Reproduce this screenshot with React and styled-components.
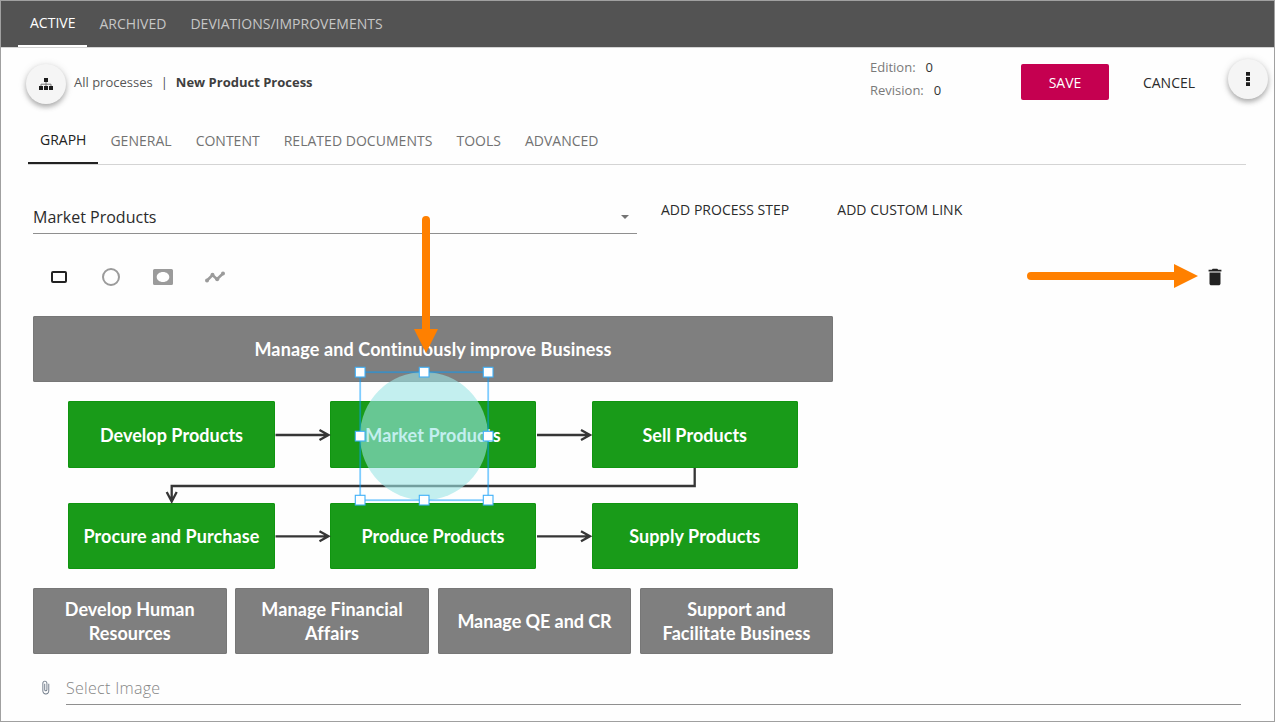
import React from "react";
import styled, { createGlobalStyle } from "styled-components";
import { MdAttachFile, MdDelete } from "react-icons/md";

const GlobalStyle = createGlobalStyle`
  *, *::before, *::after { box-sizing: border-box; }
  body { margin: 0; background: #fff; font-family: "Open Sans", "Noto Sans", sans-serif; }
  button { font: inherit; border: 0; background: none; padding: 0; margin: 0; }
`;

const Window = styled.div`
  position: relative;
  width: 1275px;
  height: 722px;
  border: 1px solid #a0a0a0;
  background: #fefefe;
  overflow: hidden;
`;

const TopBar = styled.nav`
  display: flex;
  height: 47px;
  padding-left: 17px;
  background: #535353;
  border-bottom: 1px solid #d4d4d4;
`;

const TopTab = styled.button`
  height: 46px;
  padding: ${(p) => (p.$active ? "12px 12px 0" : "13px 12px 0")};
  font-size: 14px;
  line-height: 20px;
  letter-spacing: ${(p) => p.$track || 0}px;
  color: ${(p) => (p.$active ? "#fff" : "#c6c6c6")};
  border-bottom: ${(p) => (p.$active ? "2px solid #fff" : "0")};
  display: flex;
  align-items: flex-start;
  white-space: nowrap;
`;

const Header = styled.header`
  display: flex;
  align-items: flex-start;
  height: 69px;
  padding: 11px 6px 0 25px;
`;

const RoundButton = styled.button`
  display: grid;
  place-items: center;
  flex: none;
  width: 40px;
  height: 40px;
  margin-top: ${(p) => p.$top}px;
  border-radius: 50%;
  background: #f5f5f5;
  box-shadow: 0 3px 5px rgba(0, 0, 0, 0.26), 0 1px 8px rgba(0, 0, 0, 0.13);
`;

const Breadcrumb = styled.div`
  display: flex;
  flex: none;
  width: 804px;
  padding: 13px 0 0 8px;
  font-size: 13px;
  line-height: 20px;
  color: #575757;
  white-space: nowrap;
`;

const Separator = styled.span`
  margin: 0 8px;
  color: #505050;
`;

const Current = styled.strong`
  font-weight: 700;
  color: #3f3f3f;
`;

const Meta = styled.dl`
  flex: none;
  width: 151px;
  margin: -3px 0 0;
  font-size: 13px;
  line-height: 23px;
`;

const MetaRow = styled.div`
  display: flex;
  gap: 10px;
  dt { color: #7a7a7a; }
  dd { margin: 0; color: #333; }
`;

const ActionButton = styled.button`
  flex: none;
  height: 36px;
  margin-top: 5px;
  width: ${(p) => p.$width}px;
  font-size: 14px;
  line-height: 20px;
  border-radius: 2px;
  padding-top: 2px;
  color: ${(p) => (p.$primary ? "#fff" : "#2b2b2b")};
  background: ${(p) => (p.$primary ? "#c50050" : "transparent")};
`;

const MenuSlot = styled.div`
  display: flex;
  flex: 1;
  justify-content: flex-end;
  margin-left: -4px;
`;

const Tabs = styled.nav`
  display: flex;
  height: 48px;
  margin: 0 28px 0 27px;
  border-bottom: 1px solid #d4d4d4;
`;

const Tab = styled.button`
  height: 47px;
  display: flex;
  align-items: flex-start;
  padding: ${(p) => (p.$active ? "13px 12px 0" : "14px 12px 0")};
  font-size: 14px;
  line-height: 20px;
  letter-spacing: ${(p) => p.$track || 0}px;
  color: ${(p) => (p.$active ? "#222" : "#727272")};
  border-bottom: ${(p) => (p.$active ? "2px solid #222" : "0")};
  white-space: nowrap;
`;

const StepRow = styled.div`
  display: flex;
  height: 69px;
  padding: 30px 0 0 32px;
  align-items: flex-start;
`;

const Select = styled.div`
  display: flex;
  align-items: center;
  justify-content: space-between;
  width: 604px;
  height: 39px;
  padding: 5px 8px 0 0;
  border-bottom: 1px solid #8f8f8f;
  font-size: 16px;
  line-height: 22px;
  color: #2b2b2b;
`;

const Caret = styled.span`
  border: 4px solid transparent;
  border-top-color: #747474;
  border-bottom: 0;
`;

const TextButton = styled.button`
  height: 20px;
  margin: 5px 24px 0;
  font-size: 14px;
  line-height: 20px;
  letter-spacing: 0.02px;
  color: #2b2b2b;
  white-space: nowrap;
`;

const Toolbar = styled.div`
  display: flex;
  align-items: center;
  justify-content: space-between;
  height: 82px;
  padding: 4px 47px 0 46px;
`;

const Tools = styled.div`
  display: flex;
  gap: 28px;
`;

const Tool = styled.button`
  display: grid;
  place-items: center;
  width: 24px;
  height: 24px;
  color: ${(p) => (p.$active ? "#222" : "#9b9b9b")};
`;

const Canvas = styled.section`
  position: relative;
  width: 800px;
  height: 340px;
  margin-left: 32px;
`;

const Node = styled.div`
  position: absolute;
  left: ${(p) => p.$x}px;
  top: ${(p) => p.$y}px;
  width: ${(p) => p.$w}px;
  height: ${(p) => p.$h}px;
  display: flex;
  align-items: center;
  justify-content: center;
  text-align: center;
  white-space: pre-line;
  border-radius: 2px;
  color: #fff;
  background: ${(p) => (p.$core ? "#199b19" : "#7f7f7f")};
  box-shadow: inset 0 0 0 1px ${(p) => (p.$core ? "#109510" : "#777")};
  font-family: Lato, "Open Sans", sans-serif;
  font-weight: 700;
  font-size: 18px;
  line-height: 24px;
  letter-spacing: ${(p) => p.$track || 0}px;
  font-variant-ligatures: none;
`;

const Overlay = styled.svg`
  position: absolute;
  left: 0;
  top: 0;
  overflow: visible;
  pointer-events: none;
`;

const ImageField = styled.div`
  display: flex;
  align-items: flex-start;
  padding: 16px 33px 0 36px;
`;

const ClipIcon = styled(MdAttachFile)`
  margin: 8px 13.5px 0 0.5px;
  color: #6f7a88;
`;

const ImageInput = styled.div`
  flex: 1;
  height: 33px;
  padding-top: 5px;
  font-size: 16px;
  line-height: 22px;
  font-weight: 300;
  letter-spacing: 0.3px;
  color: #868686;
  border-bottom: 1px solid #8f8f8f;
`;

const nodes = [
  { x: 0, y: 0, w: 800, h: 66, text: "Manage and Continuously improve Business", track: 0.13 },
  { x: 35, y: 85, w: 207, h: 67, text: "Develop Products", core: true, track: 0.03 },
  { x: 297, y: 85, w: 206, h: 67, text: "Market Products", core: true, track: 0.1 },
  { x: 558.5, y: 85, w: 206.5, h: 67, text: "Sell Products", core: true, track: 0.03 },
  { x: 35, y: 187, w: 207, h: 66, text: "Procure and Purchase", core: true, track: 0.1 },
  { x: 297, y: 187, w: 206, h: 66, text: "Produce Products", core: true, track: 0.07 },
  { x: 558.5, y: 187, w: 206.5, h: 66, text: "Supply Products", core: true, track: 0.1 },
  { x: 0, y: 272, w: 193.5, h: 66, text: "Develop Human\nResources", track: 0.03 },
  { x: 202, y: 272, w: 194, h: 66, text: "Manage Financial\nAffairs", track: 0.12 },
  { x: 405, y: 272, w: 193, h: 66, text: "Manage QE and CR", track: -0.06 },
  { x: 607, y: 272, w: 193, h: 66, text: "Support and\nFacilitate Business", track: 0.06 },
];

const handles = [
  [360, 372], [424, 372], [488, 372],
  [360, 436], [488, 436],
  [360, 500], [424, 500], [488, 500],
];

function Connector({ x, y }) {
  return <path d={`M${x} ${y}h53m-9-5l9 5l-9 5`} />;
}

function Selection() {
  return (
    <Overlay width="1275" height="722" viewBox="1 1 1275 722">
      <circle cx="424" cy="436" r="64" fill="rgba(155,228,228,0.6)" />
      <rect x="360.2" y="372.2" width="128" height="128" fill="none" stroke="rgba(0,155,255,0.5)" strokeWidth="1.8" />
      {handles.map(([x, y]) => (
        <rect key={`${x}-${y}`} x={x - 4.7} y={y - 4.7} width="9.7" height="9.7" fill="#fff" stroke="#3fb0f8" strokeWidth="1.1" />
      ))}
      <g fill="#ff8000">
        <path d="M422 220a4 4 0 0 1 8 0V329h8L426 353L414 329h8Z" />
        <path d="M1031 272a4 4 0 0 0 0 8H1174v8L1198 276L1174 264v8Z" />
      </g>
    </Overlay>
  );
}

export default function App() {
  return (
    <Window>
      <GlobalStyle />
      <TopBar>
        <TopTab $active>ACTIVE</TopTab>
        <TopTab $track={0.02}>ARCHIVED</TopTab>
        <TopTab $track={0.02}>DEVIATIONS/IMPROVEMENTS</TopTab>
      </TopBar>
      <Header>
        <RoundButton $top={5} aria-label="Process tree">
          <svg width="14" height="12" viewBox="0 0 14 12">
            <path d="M7 4v4M2 8V6.2h10V8" fill="none" stroke="#777" strokeWidth="1" />
            <path d="M5 0h4v4H5zM0 8h4v4H0zM5 8h4v4H5zM10 8h4v4h-4z" fill="#1c1c1c" />
          </svg>
        </RoundButton>
        <Breadcrumb>
          <span>All processes</span>
          <Separator>|</Separator>
          <Current>New Product Process</Current>
        </Breadcrumb>
        <Meta>
          <MetaRow><dt>Edition:</dt><dd>0</dd></MetaRow>
          <MetaRow><dt>Revision:</dt><dd>0</dd></MetaRow>
        </Meta>
        <ActionButton $primary $width={88}>SAVE</ActionButton>
        <ActionButton $width={120}>CANCEL</ActionButton>
        <MenuSlot>
          <RoundButton $top={0} aria-label="More">
            <svg width="4" height="14" viewBox="0 0 4 14">
              <path d="M0 0h4v3.8H0zM0 5.1h4v3.8H0zM0 10.2h4V14H0z" fill="#1c1c1c" />
            </svg>
          </RoundButton>
        </MenuSlot>
      </Header>
      <Tabs>
        <Tab $active>GRAPH</Tab>
        <Tab $track={0.02}>GENERAL</Tab>
        <Tab>CONTENT</Tab>
        <Tab $track={0.03}>RELATED DOCUMENTS</Tab>
        <Tab $track={0.02}>TOOLS</Tab>
        <Tab>ADVANCED</Tab>
      </Tabs>
      <StepRow>
        <Select>
          <span>Market Products</span>
          <Caret />
        </Select>
        <TextButton>ADD PROCESS STEP</TextButton>
        <TextButton>ADD CUSTOM LINK</TextButton>
      </StepRow>
      <Toolbar>
        <Tools>
          <Tool $active aria-label="Rectangle">
            <svg width="16" height="12" viewBox="0 0 16 12">
              <rect x="1" y="1" width="14" height="10" rx="1" fill="none" stroke="currentColor" strokeWidth="2" />
            </svg>
          </Tool>
          <Tool aria-label="Circle">
            <svg width="18" height="18" viewBox="0 0 18 18">
              <circle cx="9" cy="9" r="8" fill="none" stroke="currentColor" strokeWidth="2" />
            </svg>
          </Tool>
          <Tool aria-label="Media">
            <svg width="20" height="16" viewBox="0 0 20 16">
              <path fillRule="evenodd" fill="currentColor" d="M1.5 0h17A1.5 1.5 0 0 1 20 1.5v13a1.5 1.5 0 0 1-1.5 1.5h-17A1.5 1.5 0 0 1 0 14.5v-13A1.5 1.5 0 0 1 1.5 0ZM10 3C6.3 3 3.7 5.2 3.7 8s2.6 5 6.3 5s6.3-2.2 6.3-5S13.7 3 10 3Z" />
            </svg>
          </Tool>
          <Tool aria-label="Polyline">
            <svg width="20" height="12" viewBox="0 0 20 12">
              <path d="M2 9.5L7.5 4L12 8.2L18 2.5" fill="none" stroke="currentColor" strokeWidth="2.6" />
              <g fill="currentColor">
                <circle cx="2" cy="9.6" r="2" />
                <circle cx="7.5" cy="3.7" r="2" />
                <circle cx="12.2" cy="8.2" r="2" />
                <circle cx="18" cy="2.4" r="2" />
              </g>
            </svg>
          </Tool>
        </Tools>
        <Tool $active aria-label="Delete"><MdDelete size={22} /></Tool>
      </Toolbar>
      <Canvas>
        {nodes.map((n) => (
          <Node key={n.text} $x={n.x} $y={n.y} $w={n.w} $h={n.h} $core={n.core} $track={n.track}>
            {n.text}
          </Node>
        ))}
        <Overlay width="800" height="340" viewBox="33 316 800 340">
          <g fill="none" stroke="#363636" strokeWidth="2.3">
            <Connector x={275.5} y={435} />
            <Connector x={537} y={435} />
            <Connector x={275.5} y={536.3} />
            <Connector x={537} y={536.3} />
            <path d="M694.7 468V486H171.7V501m-5-9l5 9.5l5-9.5" />
          </g>
        </Overlay>
      </Canvas>
      <ImageField>
        <ClipIcon size={15} />
        <ImageInput>Select Image</ImageInput>
      </ImageField>
      <Selection />
    </Window>
  );
}
